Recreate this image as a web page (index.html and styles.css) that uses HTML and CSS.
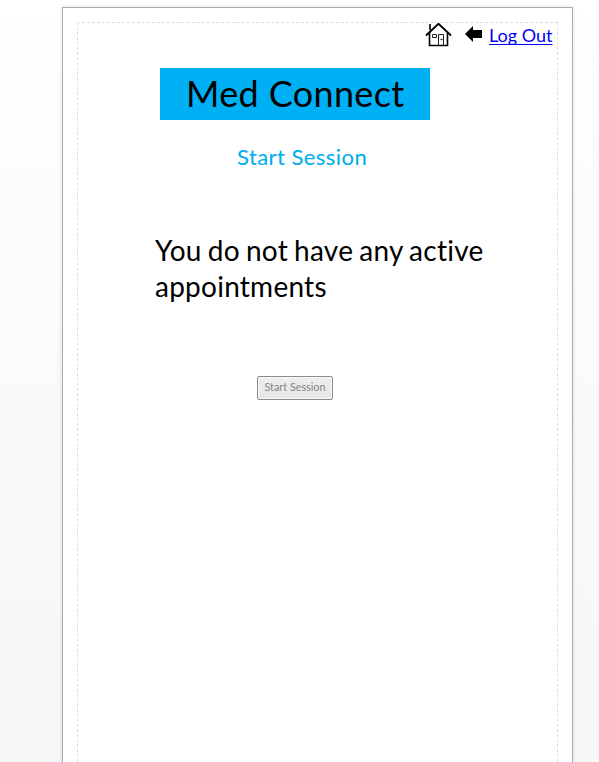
FILE: index.html
```html
<!DOCTYPE html>
<html lang="en">
<head>
<meta charset="utf-8">
<title>Med Connect</title>
<link rel="stylesheet" href="styles.css">
</head>
<body>
<main class="page">
  <div class="frame">
    <nav class="nav">
      <svg class="home" width="28" height="24" viewBox="0 0 28 24" fill="none" stroke="#000">
        <path d="M1 12.500L13.500 .8L26 12.500" stroke-width="1.900"/>
        <path d="M5 1V7M4.500 10V22.500H22.500V10" stroke-width="1.600"/>
        <path d="M7.500 11.500h4v3h-4zM13.500 22V11.500h5V22" stroke="#222" stroke-width="1"/>
        <path d="M15.500 16.500h2" stroke="#222" stroke-width="1.300"/>
      </svg>
      <svg class="back" width="17" height="16" viewBox="0 0 17 16"><path d="M0 8L8 0V4H17V12H8V16z"/></svg>
      <a class="logout" href="#">Log Out</a>
    </nav>
    <h1 class="brand">Med Connect</h1>
    <h2 class="title">Start Session</h2>
    <p class="message">You do not have any active<br>appointments</p>
    <button class="start" disabled>Start Session</button>
  </div>
</main>
</body>
</html>
```
FILE: styles.css
```css
* { box-sizing: border-box; }
body {
  margin: 0;
  height: 762px;
  padding: 7px 26px 0 62px;
  font-family: Lato, "Open Sans", sans-serif;
  font-variant-ligatures: none;
  color: #000;
  background: linear-gradient(#fff 0, #fdfdfd 120px, #f7f7f7 660px, #f7f7f7 100%);
}
.page {
  height: 755px;
  padding: 14px 14px 0;
  border: 1px solid #a5abb7;
  border-bottom: 0;
  background: #fff;
  box-shadow: 0 0 4px rgba(0, 0, 0, .13);
}
.frame {
  display: flex;
  flex-direction: column;
  height: 740px;
  border: 1px dashed #dedede;
  border-bottom: 0;
}
.nav {
  display: flex;
  justify-content: flex-end;
  height: 45px;
  padding-right: 5px;
}
.home { margin-right: 12px; }
.back { margin: 3px 7px 0 0; }
.logout {
  width: 63px;
  font-size: 18px;
  line-height: 24px;
  white-space: nowrap;
  color: #00f;
  text-underline-offset: 2px;
  text-decoration-thickness: 1px;
  text-decoration-skip-ink: none;
}
.brand {
  width: 270px;
  height: 52px;
  margin: 0 0 0 82px;
  padding-left: 26px;
  font-size: 36px;
  font-weight: 400;
  line-height: 50px;
  letter-spacing: .35px;
  white-space: nowrap;
  background: #00b0f4;
}
.title {
  margin: 23px 0 0 159px;
  font-size: 22px;
  font-weight: 400;
  line-height: 28px;
  letter-spacing: .45px;
  color: #00aeef;
  -webkit-text-stroke: .1px #00aeef;
}
.message {
  margin: 61px 0 0 77px;
  font-size: 28px;
  line-height: 36px;
  letter-spacing: .25px;
  word-spacing: -1.3px;
  white-space: nowrap;
}
.start {
  width: 76px;
  height: 24px;
  margin: 72px 0 0 179px;
  padding: 0 0 2px;
  border: 1px solid #8b8b8b;
  border-radius: 2px;
  box-shadow: inset 0 0 0 1px #fafafa;
  background: linear-gradient(#eee, #e6e6e6);
  font: 10.8px Lato, sans-serif;
  line-height: 20px;
  white-space: nowrap;
  color: #858585;
}
```
